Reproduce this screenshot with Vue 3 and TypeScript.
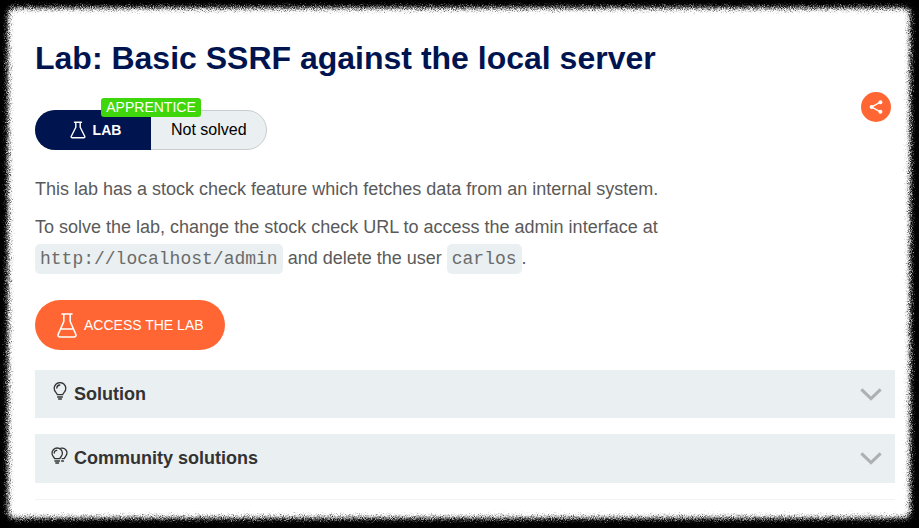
<template>
  <div class="page">
    <!-- rough torn edge of the screenshot frame -->
    <svg class="defs" width="0" height="0">
      <filter id="rough" x="-5%" y="-5%" width="110%" height="110%">
        <feGaussianBlur in="SourceGraphic" stdDeviation="2" result="soft" />
        <feTurbulence type="fractalNoise" baseFrequency="1.1" numOctaves="2" seed="4" result="noise" />
        <feDisplacementMap in="soft" in2="noise" scale="11" xChannelSelector="R" yChannelSelector="G" />
      </filter>
    </svg>
    <div class="sheet"></div>

    <div class="content">
      <h1 class="title">Lab: Basic SSRF against the local server</h1>

      <div class="status-row">
        <div class="pill">
          <span class="level">APPRENTICE</span>
          <div class="pill-lab">
            <svg class="pill-flask" viewBox="0 0 16 18" fill="none" stroke="#fff" stroke-width="1.4" stroke-linejoin="round" stroke-linecap="round">
              <path d="M4.5 1.2h7M5.8 1.2v5L1.3 15.2c-.4.9.1 1.6 1 1.6h11.4c.9 0 1.4-.7 1-1.6L10.2 6.2v-5" />
            </svg>
            <span>LAB</span>
          </div>
          <div class="pill-state">Not solved</div>
        </div>
        <button class="share" type="button" aria-label="Share">
          <svg viewBox="0 0 16 16" width="16" height="16" fill="none" stroke="#fff">
            <path d="M12.3 3.2 3.7 8l8.6 4.8" stroke-width="1.4" />
            <circle cx="12.4" cy="3.2" r="2" fill="#fff" stroke="none" />
            <circle cx="3.6" cy="8" r="2" fill="#fff" stroke="none" />
            <circle cx="12.4" cy="12.8" r="2" fill="#fff" stroke="none" />
          </svg>
        </button>
      </div>

      <div class="intro">
        <p>This lab has a stock check feature which fetches data from an internal system.</p>
        <p>
          To solve the lab, change the stock check URL to access the admin interface at<br />
          <code>http://localhost/admin</code> and delete the user <code>carlos</code>.
        </p>
      </div>

      <a class="access" href="#">
        <svg class="access-flask" viewBox="0 0 20 25" fill="none" stroke="#fff" stroke-width="1.6" stroke-linejoin="round" stroke-linecap="round">
          <path d="M5 1h10M6.8 1v7.5L1.2 21.2c-.6 1.5.2 2.8 1.8 2.8h14c1.6 0 2.4-1.3 1.8-2.8L13.2 8.5V1M4 16h12" />
        </svg>
        <span>ACCESS THE LAB</span>
      </a>

      <div v-for="item in sections" :key="item.label" class="section" :class="item.kind">
        <svg v-if="item.kind === 'single'" class="bulb" viewBox="0 0 14 18" fill="none" stroke="#333" stroke-width="1.3" stroke-linecap="round">
          <path d="M4.3 12.6C3.6 10.6 1.2 9.6 1.2 6.4a5.8 5.8 0 0 1 11.6 0c0 3.2-2.4 4.2-3.1 6.2ZM4.6 15h4.8M5.6 17h2.8M3.8 6a3.2 3.2 0 0 1 3-3" />
        </svg>
        <svg v-else class="bulbs" viewBox="0 0 17 18" fill="none" stroke="#333" stroke-width="1.3" stroke-linecap="round">
          <path d="M3.6 11.6C3 10 1 9 1 6.2a5.2 5.2 0 0 1 10.4 0c0 2.8-2 3.8-2.6 5.4ZM3.9 14h4.6M4.8 16h2.8M3.2 6a2.8 2.8 0 0 1 2.6-2.7M10 1.2c3.3-.6 6 1.6 6 4.6 0 2.8-2 3.8-2.6 5.6l-2.2.2M10.6 14h1.9" />
        </svg>
        <span class="section-label">{{ item.label }}</span>
        <svg class="chevron" viewBox="0 0 24 14" fill="none" stroke="#aeb0b2" stroke-width="3.4">
          <path d="M1.5 1.5 12 11.5 22.5 1.5" />
        </svg>
      </div>

      <div class="rule"></div>
    </div>
  </div>
</template>

<script setup lang="ts">
interface Section {
  label: string
  kind: 'single' | 'community'
}

const sections: Section[] = [
  { label: 'Solution', kind: 'single' },
  { label: 'Community solutions', kind: 'community' }
]
</script>

<style>
body {
  background: #000;
}
</style>

<style scoped>
.page {
  position: relative;
  width: 919px;
  height: 528px;
  overflow: hidden;
  background: #000;
  font-family: "Liberation Sans", Arial, sans-serif;
}

.defs {
  position: absolute;
}

.sheet {
  position: absolute;
  top: 8px;
  left: 8px;
  right: 9px;
  bottom: 10px;
  background: #fff;
  border-radius: 6px;
  filter: url(#rough);
}

.content {
  position: relative;
  padding: 39px 24px 0 35px;
}

.title {
  margin: 0 0 33px;
  font-size: 32px;
  line-height: 38px;
  font-weight: 700;
  color: #00144f;
}

.status-row {
  display: flex;
  justify-content: space-between;
  align-items: flex-start;
  padding-right: 4px;
}

.pill {
  position: relative;
  display: flex;
  width: 232px;
  height: 40px;
  box-sizing: border-box;
  border: 1px solid #c9cdd0;
  border-radius: 20px;
  background: #eaeff1;
}

.level {
  position: absolute;
  top: -13px;
  left: 65px;
  width: 100px;
  height: 19px;
  border-radius: 3px;
  background: #3fd60c;
  color: #fff;
  font-size: 14px;
  line-height: 19px;
  text-align: center;
}

.pill-lab {
  display: flex;
  align-items: center;
  justify-content: center;
  gap: 7px;
  width: 116px;
  margin: -1px 0 -1px -1px;
  padding-left: 5px;
  box-sizing: border-box;
  border-radius: 20px 0 0 20px;
  background: #00144f;
  color: #fff;
  font-size: 14px;
  font-weight: 700;
}

.pill-flask {
  width: 16px;
  height: 18px;
}

.pill-state {
  flex: 1;
  padding-left: 20px;
  color: #000;
  font-size: 16px;
  line-height: 37px;
}

.share {
  display: flex;
  align-items: center;
  justify-content: center;
  width: 30px;
  height: 30px;
  margin-top: -18px;
  padding: 0;
  border: 0;
  border-radius: 50%;
  background: #ff6633;
}

.intro {
  margin-top: 24px;
  color: #5a5a5a;
  font-size: 18px;
  line-height: 31px;
}

.intro p {
  margin: 0 0 7px;
}

code {
  display: inline-block;
  height: 30px;
  margin-top: 1px;
  padding: 0 5px;
  box-sizing: border-box;
  border-radius: 5px;
  background: #eaeff1;
  color: #6b6b6b;
  font-family: "Liberation Mono", "Courier New", monospace;
  font-size: 18px;
  line-height: 31px;
  vertical-align: top;
}

.access {
  display: flex;
  align-items: center;
  gap: 7px;
  width: 190px;
  height: 50px;
  margin-top: 26px;
  padding-left: 22px;
  box-sizing: border-box;
  border-radius: 25px;
  background: #ff6633;
  color: #fff;
  font-size: 14px;
  text-decoration: none;
}

.access-flask {
  width: 20px;
  height: 25px;
}

.section {
  position: relative;
  display: flex;
  align-items: center;
  height: 48px;
  margin-top: 20px;
  padding: 0 13px 0 17px;
  background: #eaeff1;
  color: #333;
}

.section.community {
  height: 49px;
  margin-top: 16px;
}

.section-label {
  flex: 1;
  font-size: 18px;
  font-weight: 700;
  color: #333;
}

.bulb {
  width: 14px;
  height: 18px;
  margin: -6px 7px 0 1px;
}

.bulbs {
  width: 17px;
  height: 18px;
  margin: -6px 6px 0 -1px;
}

.chevron {
  width: 22px;
  height: 13px;
}

.rule {
  height: 1px;
  margin-top: 16px;
  background: #f2f3f4;
}
</style>
